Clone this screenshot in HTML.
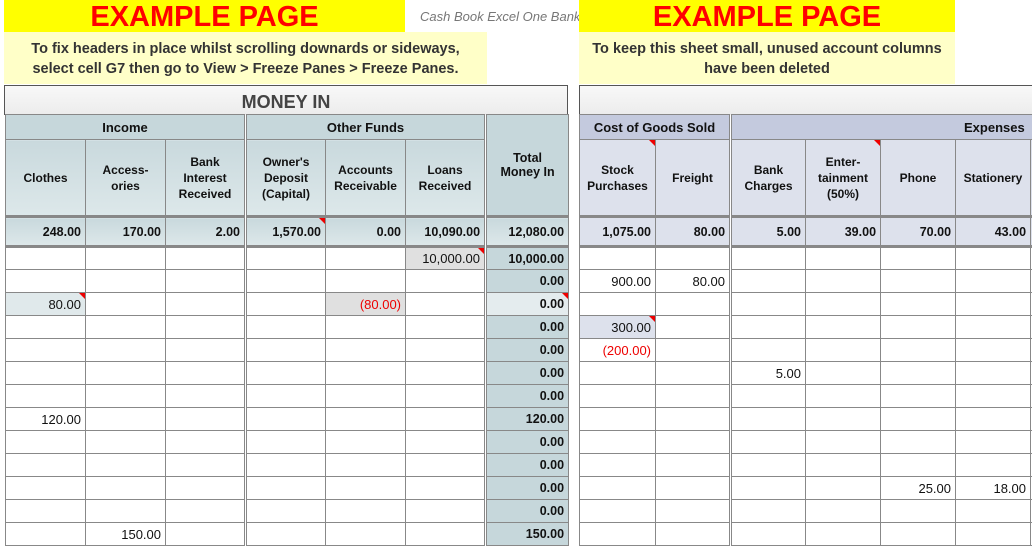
<!DOCTYPE html>
<html><head><meta charset="utf-8"><style>
*{margin:0;padding:0;box-sizing:border-box}
body{width:1032px;height:549px;overflow:hidden;background:#fff;font-family:"Liberation Sans",Arial,sans-serif;position:relative}
.abs{position:absolute}
.ex{background:#ffff00;color:#f00;font-weight:bold;font-size:29px;text-align:center;line-height:34px;height:32px}
.note{background:#ffffc8;color:#333;font-weight:bold;font-size:14.5px;text-align:center;line-height:20px;padding-top:7px;height:52px}
table{border-collapse:collapse;table-layout:fixed;position:absolute}
td{border:1px solid #888;font-size:13px;text-align:right;padding:0 4px;height:23px;color:#111;overflow:hidden;white-space:nowrap}
tr.g td{height:25px;font-weight:bold;font-size:13px;text-align:center}
tr.h td{height:77px;font-weight:bold;font-size:12px;text-align:center;white-space:normal;line-height:16px}
tr.t td{height:30px;font-weight:bold;font-size:12.5px;border-bottom:3px solid #888;border-top:3px solid #888}
.L tr.g td,.L tr.h td,.L tr.t td{background:linear-gradient(#c9d9dd,#dde8ea)}
.L tr.g td{background:#c6d7db}
.R tr.g td{background:#c4cade}
.R tr.h td,.R tr.t td{background:#dde1ec}
.L td.tot{background:#c6d7db;font-weight:bold;font-size:12.5px}
.L tr.h td.tot{font-size:13.5px;background:#c6d7db;vertical-align:top;padding-top:8px}
.dl{border-left:3px double #888}
.gr{background:#e0e0e0}
.lb{background:#e0e9eb}
.lr{background:#dde1ec}
.red{color:#e00}
.tri{position:relative}
.tri:after{content:"";position:absolute;right:0;top:0;border-left:6px solid transparent;border-top:6px solid #e00}
</style></head><body>
<div class="abs ex" style="left:4px;top:0;width:401px">EXAMPLE PAGE</div>
<div class="abs" style="left:420px;top:9px;font-style:italic;color:#777;font-size:13px">Cash Book Excel One Bank</div>
<div class="abs ex" style="left:579px;top:0;width:376px">EXAMPLE PAGE</div>
<div class="abs note" style="left:4px;top:32px;width:483px">To fix headers in place whilst scrolling downards or sideways,<br>select cell G7 then go to View &gt; Freeze Panes &gt; Freeze Panes.</div>
<div class="abs note" style="left:579px;top:32px;width:376px">To keep this sheet small, unused account columns<br>have been deleted</div>
<div class="abs" style="left:4px;top:85px;width:564px;height:30px;border:1px solid #555;border-bottom:none;background:linear-gradient(#f8f8f8,#ececec);text-align:center;font-weight:bold;font-size:18px;color:#444;line-height:32px">MONEY IN</div>
<div class="abs" style="left:579px;top:85px;width:460px;height:30px;border:1px solid #555;border-bottom:none;background:linear-gradient(#f8f8f8,#ececec)"></div>

<table class="L" style="left:5px;top:114px;width:563px">
<colgroup><col style="width:80px"><col style="width:80px"><col style="width:80px"><col style="width:80px"><col style="width:80px"><col style="width:80px"><col style="width:83px"></colgroup>
<tr class="g"><td colspan="3">Income</td><td colspan="3" class="dl">Other Funds</td><td rowspan="2" class="tot dl">Total<br>Money In</td></tr>
<tr class="h"><td>Clothes</td><td>Access-<br>ories</td><td>Bank<br>Interest<br>Received</td><td class="dl">Owner's<br>Deposit<br>(Capital)</td><td>Accounts<br>Receivable</td><td>Loans<br>Received</td></tr>
<tr class="t"><td>248.00</td><td>170.00</td><td>2.00</td><td class="dl tri">1,570.00</td><td>0.00</td><td>10,090.00</td><td class="tot dl">12,080.00</td></tr>
<tr><td></td><td></td><td></td><td class="dl"></td><td></td><td class="gr tri">10,000.00</td><td class="tot dl">10,000.00</td></tr>
<tr><td></td><td></td><td></td><td class="dl"></td><td></td><td></td><td class="tot dl">0.00</td></tr>
<tr><td class="lb tri">80.00</td><td></td><td></td><td class="dl"></td><td class="gr red">(80.00)</td><td></td><td class="tot dl tri" style="background:#e4ecee">0.00</td></tr>
<tr><td></td><td></td><td></td><td class="dl"></td><td></td><td></td><td class="tot dl">0.00</td></tr>
<tr><td></td><td></td><td></td><td class="dl"></td><td></td><td></td><td class="tot dl">0.00</td></tr>
<tr><td></td><td></td><td></td><td class="dl"></td><td></td><td></td><td class="tot dl">0.00</td></tr>
<tr><td></td><td></td><td></td><td class="dl"></td><td></td><td></td><td class="tot dl">0.00</td></tr>
<tr><td>120.00</td><td></td><td></td><td class="dl"></td><td></td><td></td><td class="tot dl">120.00</td></tr>
<tr><td></td><td></td><td></td><td class="dl"></td><td></td><td></td><td class="tot dl">0.00</td></tr>
<tr><td></td><td></td><td></td><td class="dl"></td><td></td><td></td><td class="tot dl">0.00</td></tr>
<tr><td></td><td></td><td></td><td class="dl"></td><td></td><td></td><td class="tot dl">0.00</td></tr>
<tr><td></td><td></td><td></td><td class="dl"></td><td></td><td></td><td class="tot dl">0.00</td></tr>
<tr><td></td><td>150.00</td><td></td><td class="dl"></td><td></td><td></td><td class="tot dl">150.00</td></tr>
</table>

<table class="R" style="left:579px;top:114px;width:528px">
<colgroup><col style="width:76px"><col style="width:75px"><col style="width:75px"><col style="width:75px"><col style="width:75px"><col style="width:75px"><col style="width:77px"></colgroup>
<tr class="g"><td colspan="2">Cost of Goods Sold</td><td colspan="5" class="dl" style="text-align:left;padding-left:232px">Expenses</td></tr>
<tr class="h"><td class="tri">Stock<br>Purchases</td><td>Freight</td><td class="dl">Bank<br>Charges</td><td class="tri">Enter-<br>tainment<br>(50%)</td><td>Phone</td><td>Stationery</td><td></td></tr>
<tr class="t"><td>1,075.00</td><td>80.00</td><td class="dl">5.00</td><td>39.00</td><td>70.00</td><td>43.00</td><td></td></tr>
<tr><td></td><td></td><td class="dl"></td><td></td><td></td><td></td><td></td></tr>
<tr><td>900.00</td><td>80.00</td><td class="dl"></td><td></td><td></td><td></td><td></td></tr>
<tr><td></td><td></td><td class="dl"></td><td></td><td></td><td></td><td></td></tr>
<tr><td class="lr tri">300.00</td><td></td><td class="dl"></td><td></td><td></td><td></td><td></td></tr>
<tr><td class="red">(200.00)</td><td></td><td class="dl"></td><td></td><td></td><td></td><td></td></tr>
<tr><td></td><td></td><td class="dl">5.00</td><td></td><td></td><td></td><td></td></tr>
<tr><td></td><td></td><td class="dl"></td><td></td><td></td><td></td><td></td></tr>
<tr><td></td><td></td><td class="dl"></td><td></td><td></td><td></td><td></td></tr>
<tr><td></td><td></td><td class="dl"></td><td></td><td></td><td></td><td></td></tr>
<tr><td></td><td></td><td class="dl"></td><td></td><td></td><td></td><td></td></tr>
<tr><td></td><td></td><td class="dl"></td><td></td><td>25.00</td><td>18.00</td><td></td></tr>
<tr><td></td><td></td><td class="dl"></td><td></td><td></td><td></td><td></td></tr>
<tr><td></td><td></td><td class="dl"></td><td></td><td></td><td></td><td></td></tr>
</table>
</body></html>
